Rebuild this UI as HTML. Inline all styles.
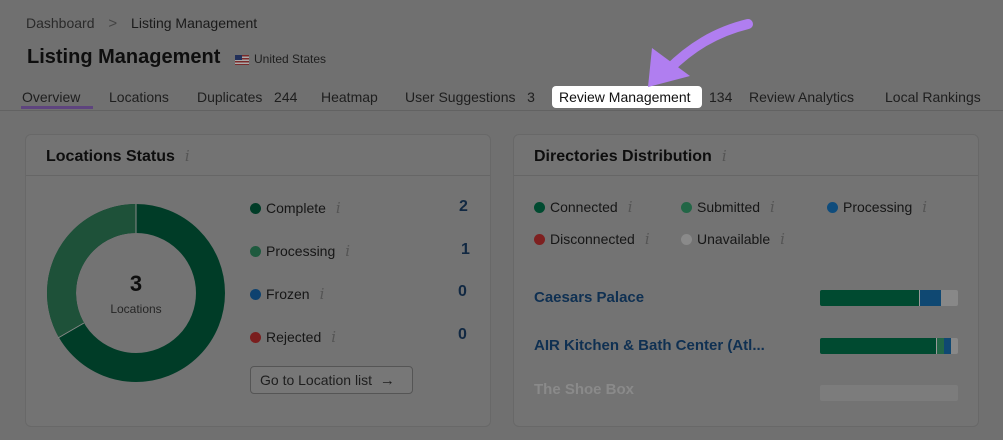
<!DOCTYPE html>
<html><head><meta charset="utf-8"><style>
*{margin:0;padding:0;box-sizing:border-box}
body{width:1003px;height:440px;background:#707070;font-family:"Liberation Sans",sans-serif;position:relative;overflow:hidden;color:#1a1a1a}
.a{position:absolute;white-space:nowrap}
.card{position:absolute;background:#737373;border:1px solid #686868;border-radius:6px}
.hd{position:absolute;left:0;right:0;top:0;height:41px;border-bottom:1px solid #666}
.tab{position:absolute;top:89px;font-size:14px;color:#1e1e1e}
.dot{display:inline-block;width:11px;height:11px;border-radius:50%;vertical-align:-1px;margin-right:5px}
.i{font-family:"DejaVu Serif",serif;font-style:italic;color:#555;margin-left:10px;font-size:15px;font-weight:normal}
.lg{font-size:14px;color:#161616}
.n{position:absolute;font-size:16px;font-weight:bold;color:#112842}
.lk{font-size:15px;font-weight:bold;color:#0f3052}
</style></head><body>
<div class="a" style="left:26px;top:15px;font-size:14px;color:#2a2a2a">Dashboard <span style="margin:0 10px;color:#444;font-size:15px">&gt;</span> <span style="color:#1a1a1a">Listing Management</span></div>
<div class="a" style="left:27px;top:46px;font-size:20px;font-weight:bold;color:#0e0e0e">Listing Management</div>
<div class="a" style="left:235px;top:55px;width:14px;height:10px;background:repeating-linear-gradient(#7a2a2a 0 1.5px,#aaa 1.5px 3px)"><div style="width:7px;height:5px;background:#22305a"></div></div>
<div class="a" style="left:254px;top:52px;font-size:12px;color:#1e1e1e">United States</div>
<div class="tab" style="left:22px">Overview</div>
<div class="a" style="left:21px;top:106px;width:72px;height:3px;background:#5e447e"></div>
<div class="tab" style="left:109px">Locations</div>
<div class="tab" style="left:197px">Duplicates&nbsp;&nbsp; 244</div>
<div class="tab" style="left:321px">Heatmap</div>
<div class="tab" style="left:405px">User Suggestions&nbsp;&nbsp; 3</div>
<div class="a" style="left:552px;top:86px;width:150px;height:22px;background:#fff;border-radius:4px"></div>
<div class="tab" style="left:559px;color:#111">Review Management</div>
<div class="tab" style="left:709px">134</div>
<div class="tab" style="left:749px">Review Analytics</div>
<div class="tab" style="left:885px">Local Rankings</div>
<div class="a" style="left:0;top:110px;width:1003px;height:1px;background:#626262"></div>
<svg class="a" style="left:630px;top:10px" width="130" height="80" viewBox="630 10 130 80">
<path d="M748 24 C715 32 690 48 668 70" stroke="#b07ef0" stroke-width="10" fill="none" stroke-linecap="round"/>
<path d="M648 87 L652 48 L690 76 Z" fill="#b07ef0"/>
</svg>
<div class="card" style="left:25px;top:134px;width:466px;height:293px">
<div class="hd"></div>
<div class="a" style="left:20px;top:12px;font-size:16px;font-weight:bold;color:#0e0e0e">Locations Status<span class="i">i</span></div>
</div>
<svg class="a" style="left:0;top:0" width="300" height="440">
<circle cx="136" cy="293" r="74.5" fill="none" stroke="#003c27" stroke-width="29"/>
<path d="M136 218.5 A74.5 74.5 0 0 0 71.5 330.25" fill="none" stroke="#1e5139" stroke-width="29"/>
<line x1="136" y1="204" x2="136" y2="233" stroke="#888" stroke-width="1"/>
<line x1="58" y1="338" x2="84" y2="323" stroke="#888" stroke-width="1"/>
</svg>
<div class="a" style="left:116px;top:271px;width:40px;text-align:center;font-size:22px;font-weight:bold;color:#0e0e0e">3</div>
<div class="a" style="left:96px;top:302px;width:80px;text-align:center;font-size:12px;color:#262626">Locations</div>
<div class="a lg" style="left:250px;top:199px"><span class="dot" style="background:#003c27"></span>Complete<span class="i">i</span></div>
<div class="a lg" style="left:250px;top:242px"><span class="dot" style="background:#1e5a3e"></span>Processing<span class="i">i</span></div>
<div class="a lg" style="left:250px;top:285px"><span class="dot" style="background:#0e426f"></span>Frozen<span class="i">i</span></div>
<div class="a lg" style="left:250px;top:328px"><span class="dot" style="background:#7a1e1e"></span>Rejected<span class="i">i</span></div>
<div class="n" style="left:459px;top:198px">2</div>
<div class="n" style="left:461px;top:241px">1</div>
<div class="n" style="left:458px;top:283px">0</div>
<div class="n" style="left:458px;top:326px">0</div>
<div class="a" style="left:250px;top:366px;width:163px;height:28px;border:1px solid #555;border-radius:4px;background:#777;font-size:14px;color:#1e1e1e;padding:5px 0 0 9px">Go to Location list&nbsp; <b style="font-size:15px">→</b></div>
<div class="card" style="left:513px;top:134px;width:466px;height:293px">
<div class="hd"></div>
<div class="a" style="left:20px;top:12px;font-size:16px;font-weight:bold;color:#0e0e0e">Directories Distribution<span class="i">i</span></div>
</div>
<div class="a lg" style="left:534px;top:198px"><span class="dot" style="background:#004a30"></span>Connected<span class="i">i</span></div>
<div class="a lg" style="left:681px;top:198px"><span class="dot" style="background:#226646"></span>Submitted<span class="i">i</span></div>
<div class="a lg" style="left:827px;top:198px"><span class="dot" style="background:#0f4c7c"></span>Processing<span class="i">i</span></div>
<div class="a lg" style="left:534px;top:230px"><span class="dot" style="background:#7e2020"></span>Disconnected<span class="i">i</span></div>
<div class="a lg" style="left:681px;top:230px"><span class="dot" style="background:#8a8a8a"></span>Unavailable<span class="i">i</span></div>
<div class="a lk" style="left:534px;top:289px">Caesars Palace</div>
<div class="a lk" style="left:534px;top:337px">AIR Kitchen &amp; Bath Center (Atl...</div>
<div class="a" style="left:534px;top:381px;font-size:15px;font-weight:bold;color:#8a8a8a">The Shoe Box</div>
<div class="a" style="left:820px;top:290px;width:138px;height:16px;border-radius:2px;overflow:hidden;display:flex"><div style="width:100px;background:#004a30;border-right:1px solid #999"></div><div style="width:21px;background:#0f4872"></div><div style="flex:1;background:#888"></div></div>
<div class="a" style="left:820px;top:338px;width:138px;height:16px;border-radius:2px;overflow:hidden;display:flex"><div style="width:117px;background:#004a30;border-right:1px solid #999"></div><div style="width:7px;background:#226646"></div><div style="width:7px;background:#0f4872"></div><div style="flex:1;background:#888"></div></div>
<div class="a" style="left:820px;top:385px;width:138px;height:16px;border-radius:2px;background:#7c7c7c"></div>
</body></html>
